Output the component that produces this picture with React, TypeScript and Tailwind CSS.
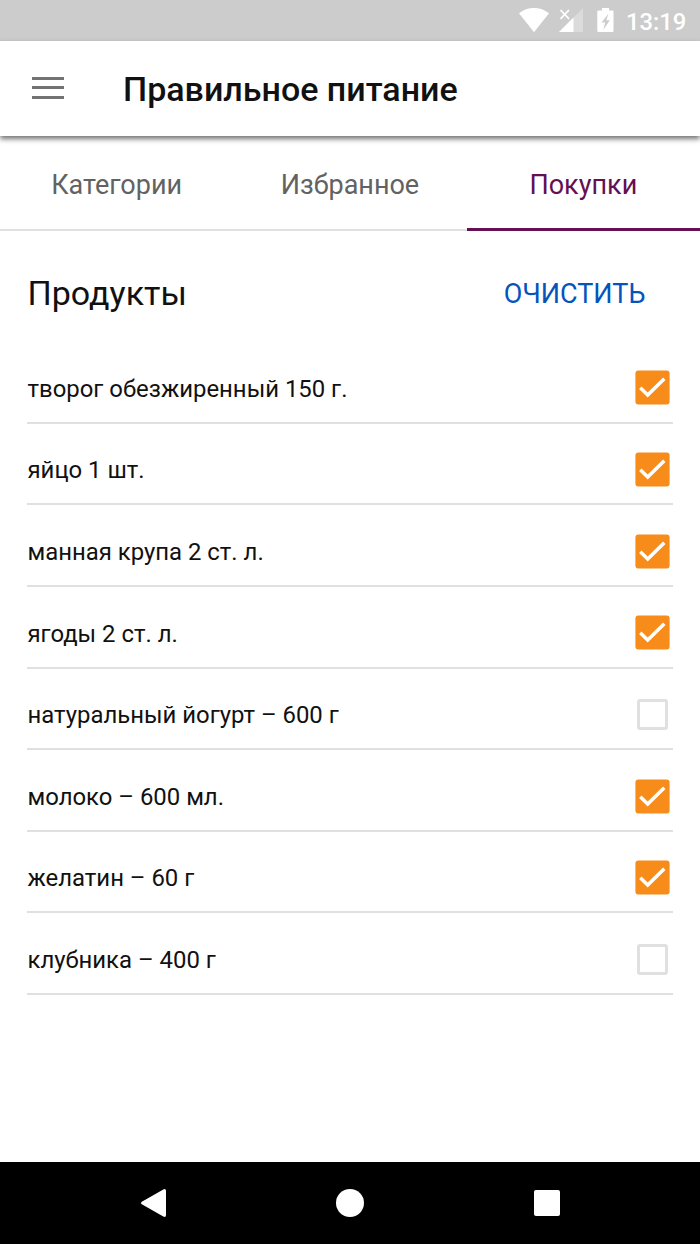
import { useState } from "react";

const tabs = ["Категории", "Избранное", "Покупки"];

const initialProducts = [
  { name: "творог обезжиренный 150 г.", checked: true },
  { name: "яйцо 1 шт.", checked: true },
  { name: "манная крупа 2 ст. л.", checked: true },
  { name: "ягоды 2 ст. л.", checked: true },
  { name: "натуральный йогурт – 600 г", checked: false },
  { name: "молоко – 600 мл.", checked: true },
  { name: "желатин – 60 г", checked: true },
  { name: "клубника – 400 г", checked: false },
];

const StatusBar = () => (
  <div className="flex h-[41px] shrink-0 items-start bg-[#cccccc] pl-[519px] pt-2 text-white">
    <svg className="h-6 w-[30px]" viewBox="0 0 30 24" fill="currentColor">
      <path d="M0 5.2C4.4 1.7 9.4 0 15 0s10.600 1.700 15 5.200L15 24.200z" />
    </svg>
    <svg className="ml-[10px] h-6 w-6" viewBox="0 0 24 24" fill="currentColor">
      <path d="M24 0v24H0z" opacity="0.3" />
      <path d="M14.500 9.500V24H0z" />
      <path d="M1.500 2l8.500 8.800M10 2L1.500 10.800" stroke="currentColor" strokeWidth="1.700" />
    </svg>
    <svg className="ml-[14px] h-6 w-[17px]" viewBox="0 0 17 24" fill="currentColor">
      <path
        fillRule="evenodd"
        d="M5 0h7v2.400h3.500q1 0 1 1v19.600q0 1-1 1h-14Q.3 24 .3 23V3.400q0-1 1.200-1H5zM11.300 5.800L4.600 14.600h3.600L6.400 21.800L12.800 12.200H9.400z"
      />
    </svg>
    <span className="ml-[12px] mt-px text-[23.800px] font-medium leading-[26px]">13:19</span>
  </div>
);

const Header = () => (
  <header className="relative z-10 flex h-[95px] shrink-0 items-center bg-white pl-[31.500px] shadow-[0_3px_5px_0_rgba(0,0,0,0.55)]">
    <button className="-mt-[2px] flex h-[22px] w-8 flex-col justify-between" aria-label="Меню">
      <span className="h-[3px] w-full bg-[#737373]" />
      <span className="h-[3px] w-full bg-[#737373]" />
      <span className="h-[3px] w-full bg-[#737373]" />
    </button>
    <h1 className="ml-[59.500px] mt-px whitespace-nowrap text-[34px] font-medium leading-10 text-[#111111]">
      Правильное питание
    </h1>
  </header>
);

const Checkbox = ({ checked }: { checked: boolean }) =>
  checked ? (
    <svg className="mr-[3px] size-[35px]" viewBox="0 0 35 35" fill="none">
      <rect x="0.400" y="0.400" width="34.200" height="34.200" rx="3" fill="#f78c1a" />
      <path d="M5.300 17.800L12.700 25L29.300 8.700" stroke="white" strokeWidth="3.500" />
    </svg>
  ) : (
    <span className="mr-[5px] size-[31px] rounded-[3px] border-[3px] border-[#e0e0e0]" />
  );

export default function App() {
  const [activeTab, setActiveTab] = useState("Покупки");
  const [products, setProducts] = useState(initialProducts);

  const toggle = (name: string) =>
    setProducts(products.map((p) => (p.name === name ? { ...p, checked: !p.checked } : p)));

  return (
    <div className="flex h-[1244px] w-[700px] flex-col overflow-hidden bg-white font-['Roboto',sans-serif]">
      <StatusBar />
      <Header />

      <nav className="grid h-[95px] shrink-0 grid-cols-3">
        {tabs.map((tab) => (
          <button
            key={tab}
            onClick={() => setActiveTab(tab)}
            className={`flex items-center justify-center text-[27px] ${
              activeTab === tab
                ? "border-b-[3px] border-[#650f55] pt-[6px] text-[#650f55]"
                : "border-b-2 border-[#e0e0e0] pt-[5px] text-[#626262]"
            }`}
          >
            {tab}
          </button>
        ))}
      </nav>

      <main className="flex-1 px-[27px]">
        <div className="flex h-[110.900px] items-center justify-between pr-[27.500px] pt-[15px]">
          <h2 className="-mt-px pl-[0.500px] text-[34px] text-[#111111]">Продукты</h2>
          <button className="text-[27px] text-[#0554be]" onClick={() => setProducts([])}>
            ОЧИСТИТЬ
          </button>
        </div>
        <ul>
          {products.map((product) => (
            <li
              key={product.name}
              onClick={() => toggle(product.name)}
              className="flex h-[81.660px] items-center justify-between border-b-2 border-[#e0e0e0] pt-[12.500px]"
            >
              <span className="pl-[0.500px] pt-[3px] text-[23.900px] text-[#111111]">{product.name}</span>
              <Checkbox checked={product.checked} />
            </li>
          ))}
        </ul>
      </main>

      <footer className="flex h-[82px] shrink-0 items-center bg-black pl-[141px] text-white">
        <svg className="h-7 w-[25px]" viewBox="0 0 25 28" fill="currentColor">
          <path d="M.8 12.700L22.300.4Q25-.7 25 2v24q0 2.700-2.700 1.600L.8 15.300q-1.600-1.300 0-2.600z" />
        </svg>
        <span className="ml-[170px] size-7 rounded-full bg-white" />
        <span className="ml-[170px] size-[26px] rounded-[2px] bg-white" />
      </footer>
    </div>
  );
}
